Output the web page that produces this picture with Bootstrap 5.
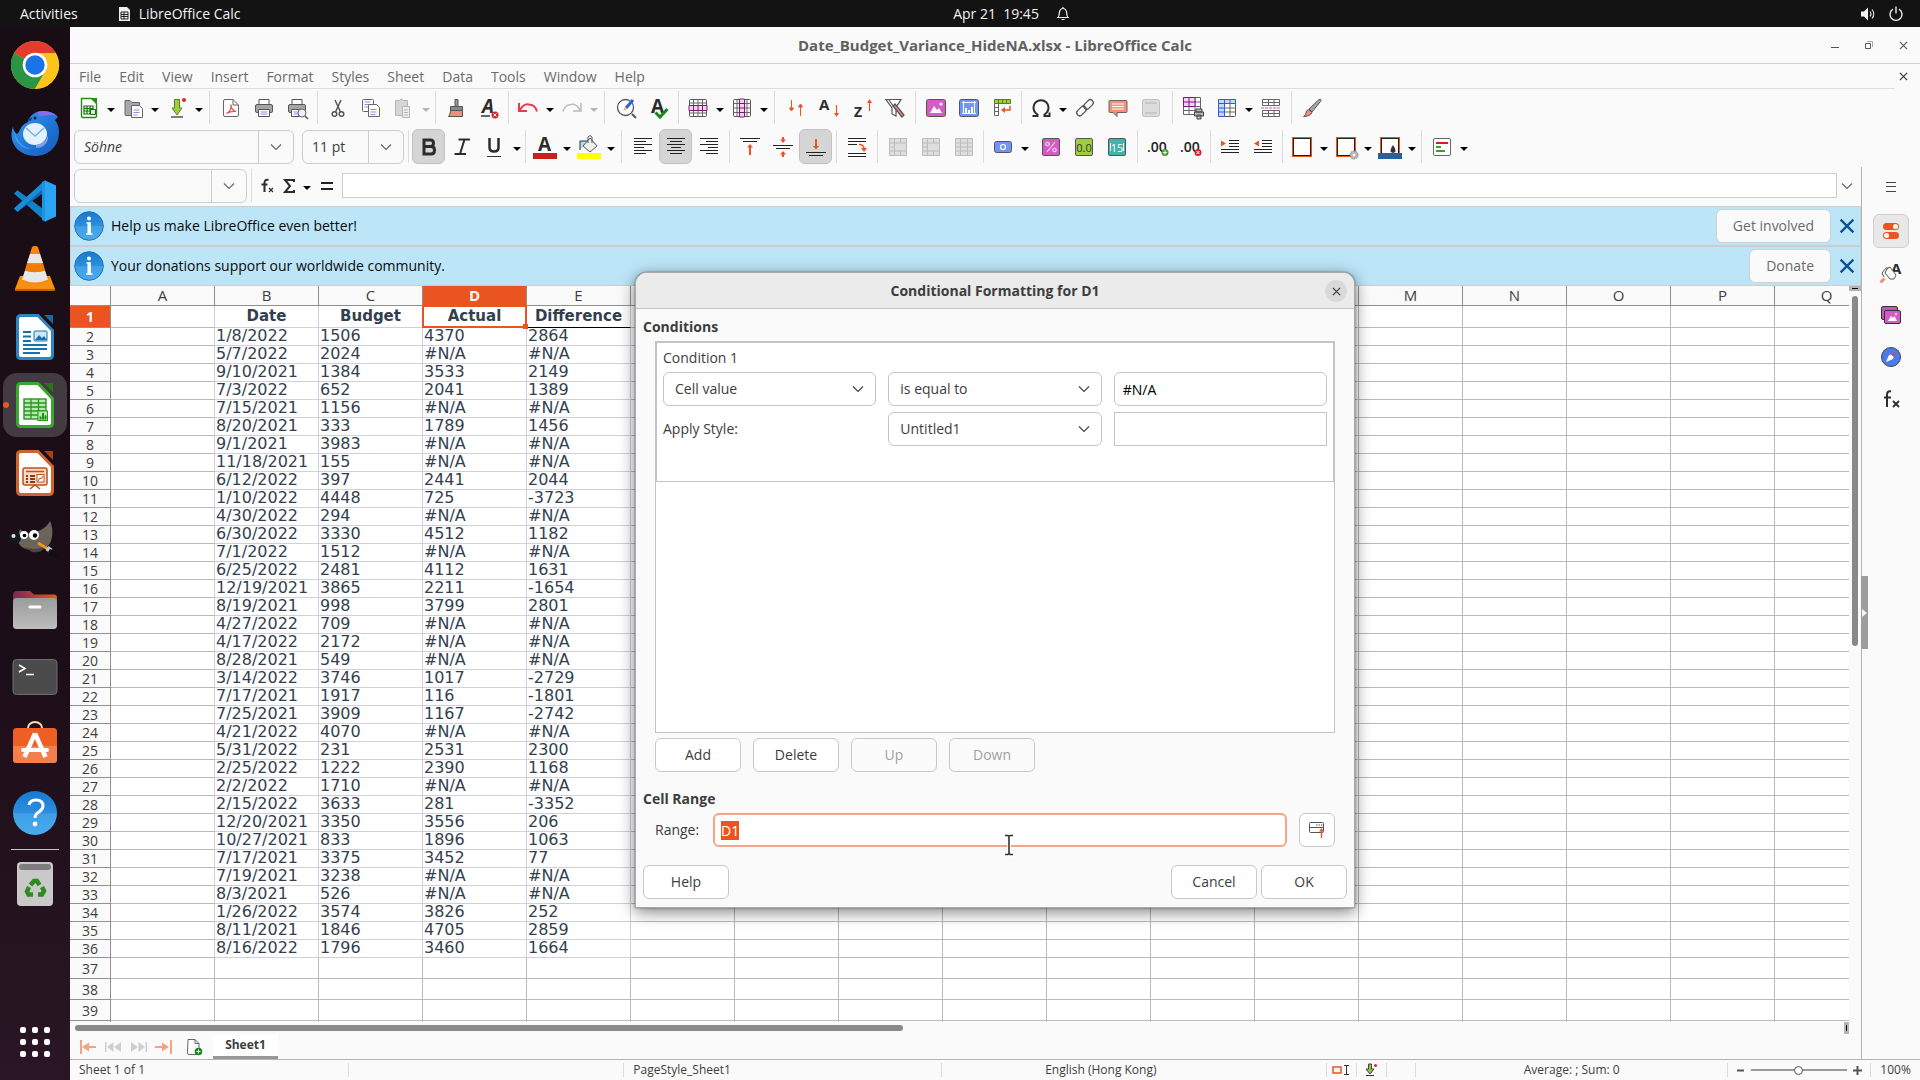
<!DOCTYPE html>
<html lang="en">
<head>
<meta charset="utf-8">
<meta name="viewport" content="width=device-width, initial-scale=1">
<title>Date_Budget_Variance_HideNA.xlsx - LibreOffice Calc</title>
<link rel="stylesheet" href="https://cdn.jsdelivr.net/npm/bootstrap@5.3.0/dist/css/bootstrap.min.css">
<style>
:root{--ui:"Open Sans","Noto Sans",sans-serif;--orange:#e95420;--bg:#fafafa;--line:#cdcdcd;--txt:#3d3d3d;--dim:#6a6a6a}
body{font-family:var(--ui);font-size:14px;line-height:20px;color:var(--txt);background:var(--bg)}
button,input,select{font:inherit;color:inherit}
svg{display:block;flex:none;overflow:visible}
.fill{flex:1 1 0;min-width:0;min-height:0}
.top-panel{height:27px;flex:none;background:#131313;color:#f2f2f2}
.top-panel button,.plain{background:none;border:0;padding:0}
.panel-side{flex:1 1 0}
.clock{margin-left:104px}
.dock{width:70px;flex:none;background:linear-gradient(#190d15,#1c0e18 60%,#2a1624);padding-top:6px}
.dock-app{width:64px;height:64px;flex:none;border-radius:14px;margin-bottom:4px;background:none;border:0;padding:0;display:flex;align-items:center;justify-content:center;position:relative}
.dock-app.on{background:#443a41}
.dock-app.on::before{content:"";position:absolute;left:0;top:29px;width:6px;height:6px;border-radius:3px;background:var(--orange)}
.dock-app.last{margin:auto 0 6px}
.dock-rule{width:48px;height:1px;flex:none;background:#c9c5c8;margin-bottom:2px}
.title-bar{height:37px;flex:none;border-bottom:1px solid #cfcfcf;color:#616161;font-size:15px}
.win-ctl{width:34px;height:34px;display:flex;align-items:center;justify-content:center}
.menu-bar{height:25px;border-bottom:1px solid #dedede;padding:1px 0 0 9px;gap:18px;color:var(--dim)}
.menu-bar a{color:inherit;text-decoration:none}
.tools{height:39px;flex:none;padding:0 0 2px 2px}
.tools-text{padding-left:0}
.tool{width:33px;height:35px;flex:none;border:1px solid transparent;border-radius:6px;background:none;padding:0;display:flex;align-items:center;justify-content:center}
.tool.on{background:#d5d5d5;border-color:#c2c2c2}
.drop{width:11px;height:35px;flex:none;border:0;background:none;padding:4px 0 0;display:flex;align-items:center;justify-content:center}
.drop::before{content:"";border:4px solid transparent;border-top-color:#000;border-bottom:0;width:0}
.drop:disabled::before{border-top-color:#b5b5b5}
.rule-v{width:8px;height:33px;flex:none;display:flex;justify-content:center}
.rule-v::before{content:"";width:1px;background:#dcdcdc}
.rule-w{width:10px}.rule-n{width:6px}
.combo{height:34px;flex:none;border:1px solid var(--line);border-radius:6px;background:var(--bg);overflow:hidden}
.combo input{border:0;background:none;flex:1 1 0;min-width:0;padding:0 9px;outline:0}
.combo button{width:35px;border:0;border-left:1px solid var(--line);background:none;padding:0;display:flex;align-items:center;justify-content:center}
.fx-row{height:39px;flex:none;padding:0 0 2px 4px}
.fx-input{height:25px;border:1px solid var(--line);background:#fff;border-radius:0;outline:0;min-width:0}
.info-row{height:40px;flex:none;background:#bce5f7;border:1px solid #cdcdcd;color:#0a0a0a;padding:0 5px 0 3px}
.info-row span{margin-left:7px}
.pill{height:34px;border:1px solid #c8c8c8;border-radius:6px;background:#fff;padding:0 16px;color:var(--txt)}
.info-row .pill{color:var(--dim);background:var(--bg);border-color:#d0d0d0}
.sheet{overflow:hidden;background:#fff}
.sheet table{table-layout:fixed;border-collapse:separate;border-spacing:0;width:1809px;font-family:var(--ui)}
.sheet th,.sheet td{padding:0;border:0 solid #b9b9b9;border-width:0 1px 1px 0;height:18px;overflow:visible;white-space:nowrap}
.sheet th{background:var(--bg);border-color:#8f8f8f;font-weight:400;text-align:center;line-height:17px;font-size:14px}
.sheet thead th{height:20px;line-height:19px;font-size:15px}
.sheet th.on{background:var(--orange);color:#fff;font-weight:700}
.sheet .first-row>*,.sheet .tall>*{height:21px}
.sheet td.cell{border-color:#cfcfde;font:16px/15px "DejaVu Sans",sans-serif;color:#333f4f;vertical-align:top;padding-left:1px;position:relative}
.sheet td.edge{border-right-color:#cfcfde}
.sheet .first-row td.cell{font:bold 15px/21px "DejaVu Sans",sans-serif;text-align:center;padding:0}
.sheet td.ink{border-bottom-color:#000}
.pick{position:absolute;inset:-1px;border:2px solid var(--orange);z-index:1}
.pick::after{content:"";position:absolute;right:-3px;bottom:-3px;width:5px;height:5px;background:var(--orange)}
.v-scroll{width:12px;flex:none;background:var(--bg)}
.v-grip{height:5px;background:#b5b5b5;display:flex;align-items:center;justify-content:center}
.v-grip::before{content:"";width:6px;height:1px;background:#000}
.v-thumb{width:6px;height:70%;max-height:350px;border-radius:3px;background:#898989;margin:5px 3px 0}
.h-scroll{height:12px;flex:none}
.h-track{flex:1;padding:3px 8px 0 5px}
.h-thumb{width:47%;height:6px;border-radius:3px;background:#898989}
.h-grip{width:5px;margin-right:12px;background:#b5b5b5;display:flex;align-items:center;justify-content:center}
.h-grip::before{content:"";width:1px;height:6px;background:#000}
.tabs-row{height:25px;flex:none;padding-left:8px}
.sheet-tab{height:25px;width:65px;background:#fff;border:0;border-bottom:3px solid #989898;font-weight:700;padding:0;font-size:12px}
.side{width:59px;flex:none;border-left:1px solid #b4b4b4;position:relative;padding-top:3px}
.side .tool{width:36px;height:34px;margin-bottom:8px}
.side .tool:first-child{margin-bottom:10px}
.side .tool.on{background:#e8e8e8;border-color:#cfcfcf}
.side-grip{position:absolute;left:-1px;top:409px;width:7px;height:73px;background:#9d9d9d;display:flex;align-items:center;justify-content:center}
.side-grip::before{content:"";border:4px solid transparent;border-left:5px solid #f4f4f4;border-right:0}
.status{height:21px;flex:none;border-top:1px solid #b4b4b4;font-size:12px}
.status>div{border-right:1px solid #dcdcdc;margin:3px 0;line-height:16px;white-space:nowrap;display:flex;align-items:center;min-width:0}
.status>div:last-child{border:0}
.status span{margin-left:9px}
.status .lang{margin:0 66px 0 0}
.zoomer{appearance:none;-webkit-appearance:none;width:96px;height:12px;background:linear-gradient(#9a9a9a,#9a9a9a) center/100% 2px no-repeat;margin:0 6px}
.zoomer::-webkit-slider-thumb{-webkit-appearance:none;width:9px;height:9px;border-radius:5px;border:1px solid #555;background:#fff}
.dlg{top:245px;width:720px;background:var(--bg);border:1px solid #a9a9a9;border-radius:12px 12px 0 0;box-shadow:0 4px 16px rgba(0,0,0,.5),0 0 2px rgba(0,0,0,.5);z-index:5}
.dlg-head{height:36px;background:#ebebeb;border-bottom:1px solid #c4c4c4;border-radius:11px 11px 0 0;padding:1px 7px 0}
.dlg-x{width:22px;height:22px;border-radius:11px;background:#d9d9d9;border:0;padding:0;display:flex;align-items:center;justify-content:center}
.dlg-body{padding:8px 7px}
.cond-list{height:392px;margin:0 12px;border:1px solid #c4c4c4;background:#fff}
.cond-box{height:140px;border:1px solid #c4c4c4;padding:5px 6px}
.cond-grid{display:grid;grid-template-columns:repeat(3,1fr);gap:6px 12px;align-items:center}
.cond-grid .form-select,.field{height:34px;border:1px solid #c4c4c4;border-radius:6px;background-color:#fff;padding:0 8px 0 11px;font-size:14px;line-height:20px;color:var(--txt);outline:0;min-width:0}
.cond-grid .form-select{background-image:url("data:image/svg+xml,%3Csvg xmlns='http://www.w3.org/2000/svg' viewBox='0 0 12 12'%3E%3Cpath d='M1 3.5l5 5 5-5' fill='none' stroke='%23444' stroke-width='1.2'/%3E%3C/svg%3E");background-size:12px;background-position:right 11px center}
.cond-grid .field{color:#000;padding-left:8px}
.preview-box{height:34px;border:1px solid #c4c4c4}
.btn-row .pill,.foot .pill{width:86px;padding:0}
.pill:disabled{color:#a0a0a0;background:#fbfbfb}
.field.hot{border:2px solid #f4a48a;padding:0 6px}
.field.hot::selection{background:var(--orange);color:#fff}
.btn-row{gap:12px;margin:5px 12px 0}
.range-head{margin-top:17px;margin-bottom:4px}
.range-row{margin:0 12px;gap:12px}
.range-row label{width:46px}
.range-row .pill{width:36px;padding:0;display:flex;align-items:center;justify-content:center}
.foot{margin-top:18px}
.caret-i{left:1002px;top:833px;z-index:9}
</style>
<script src="https://cdn.jsdelivr.net/npm/bootstrap@5.3.0/dist/js/bootstrap.bundle.min.js"></script>
</head>
<body class="d-flex flex-column vh-100 overflow-hidden position-relative">
<svg width="0" height="0" class="position-absolute">
<defs>
<linearGradient id="gi" x1="0" y1="0" x2="0" y2="1"><stop offset="0" stop-color="#1579cf"/><stop offset=".5" stop-color="#2e8fe0"/><stop offset=".52" stop-color="#3f9fe6"/><stop offset="1" stop-color="#4aabec"/></linearGradient>
<linearGradient id="gt" x1="0" y1="0" x2="1" y2="1"><stop offset="0" stop-color="#2f9bf0"/><stop offset="1" stop-color="#1458c0"/></linearGradient>
<linearGradient id="gg" x1="0" y1="0" x2="0" y2="1"><stop offset="0" stop-color="#9b9b9b"/><stop offset="1" stop-color="#bdbdbd"/></linearGradient>
<linearGradient id="gf" x1="0" y1="0" x2="1" y2="0"><stop offset="0" stop-color="#7b2857"/><stop offset="1" stop-color="#e95420"/></linearGradient>
<symbol id="chev" viewBox="0 0 12 12"><path d="M1 3.500l5 5 5-5" fill="none" stroke="#666" stroke-width="1.200"/></symbol>
<symbol id="cross" viewBox="0 0 10 10"><path d="M1 1l8 8M9 1L1 9" fill="none" stroke="currentColor" stroke-width="1.400"/></symbol>
<symbol id="info" viewBox="0 0 30 30"><circle cx="15" cy="15" r="14.300" fill="url(#gi)" stroke="#2c6ea5"/><circle cx="15" cy="7.500" r="2" fill="#fff"/><path d="M12.500 12h3.500v10.500M12 23h6.500" fill="none" stroke="#fff" stroke-width="1.600"/><path d="M15 11.500v11" stroke="#fff" stroke-width="3"/></symbol>
<symbol id="printer" viewBox="0 0 24 24"><path d="M7 3.500h10v5H7z" fill="#fff" stroke="#555"/><rect x="3.500" y="8.500" width="17" height="8" rx="1.500" fill="#a5a5a5" stroke="#555"/><path d="M6.500 13.500h11v7h-11z" fill="#fff" stroke="#555"/><path d="M8.500 16h7M8.500 18h7" stroke="#8d8fe6"/></symbol>
<symbol id="gridbase" viewBox="0 0 24 24"><rect x="3.500" y="3.500" width="17" height="17" rx="1" fill="#fff" stroke="#555"/></symbol>
</defs></svg>

<header class="top-panel d-flex align-items-center">
 <div class="panel-side d-flex align-items-center ps-3"><button type="button" class="text-reset ms-1">Activities</button>
 <button type="button" class="text-reset d-flex align-items-center gap-2 ms-4 ps-3"><svg width="13" height="16" viewBox="0 0 13 16"><path d="M1 1h8l3 3v11H1z" fill="#f0f0f0"/><path d="M3 6h7v7H3zM3 8.500h7M3 10.500h7M6 6v7" fill="none" stroke="#222"/></svg>LibreOffice Calc</button></div>
 <div class="clock d-flex align-items-center gap-3"><button type="button" class="text-reset">Apr 21&nbsp; 19:45</button><svg width="16" height="16" viewBox="0 0 16 16" fill="none" stroke="#eee" stroke-width="1.200"><path d="M3 11.500c1.500-1.500 1-3.500 1.500-5.500C5 3.500 6.300 2.500 8 2.500s3 1 3.500 3.500c.5 2 0 4 1.500 5.500zM6.500 13.500h3M8 1v1.500"/></svg></div>
 <div class="panel-side d-flex align-items-center justify-content-end gap-2 pe-3">
 <svg width="16" height="16" viewBox="0 0 16 16" class="me-1"><path d="M1 5.500h3l4-4v13l-4-4H1z" fill="#f2f2f2"/><path d="M10 5.500q2 2.500 0 5M12 3.500q3.500 4.500 0 9" fill="none" stroke="#ddd" stroke-width="1.200"/></svg>
 <svg width="16" height="16" viewBox="0 0 16 16" fill="none" stroke="#eee" stroke-width="1.400"><path d="M5 3.200a6 6 0 1 0 6 0M8 .5v7"/></svg></div>
</header>

<div class="d-flex fill">
<nav class="dock d-flex flex-column align-items-center" aria-label="Dock">
 <button class="dock-app" type="button" aria-label="Chrome"><svg width="48" height="48" viewBox="0 0 48 48"><circle cx="24" cy="24" r="24" fill="#fbc116"/><path d="M24 24L3.200 12A24 24 0 0 1 44.800 12z" fill="#e33b2e"/><path d="M24 24v-12h20.800L24 12z" fill="#e33b2e"/><path d="M3.200 12A24 24 0 0 0 24 48l10.400-18L24 24z" fill="#2a9645"/><path d="M24 12h20.800A24 24 0 0 1 24 48l10.400-18z" fill="#fdc41c"/><circle cx="24" cy="24" r="12.300" fill="#fff"/><circle cx="24" cy="24" r="9.700" fill="#1a73e8"/></svg></button>
 <button class="dock-app" type="button" aria-label="Thunderbird"><svg width="48" height="48" viewBox="0 0 48 48"><path d="M2 17C-4 36 10 47 24 47c14 0 24-10 24-24 0-6-2-9-4-12l3-3c-4-5-14-7-21-5-5 2-8 5-9 10C8 17 10 22 6 25c-3-2-4-5-4-8z" fill="url(#gt)"/><path d="M26 3c6-2 15-1 20 4-6-2-12 0-18 0z" fill="#8b6cf0"/><path d="M4 24c2 8 8 14 16 16-10 0-17-8-16-16z" fill="#6ab8ff" opacity=".5"/><ellipse cx="24" cy="25" rx="12" ry="11" fill="#e3f1fd"/><path d="M15 19l9 8 9-8" fill="none" stroke="#7fb0e0" stroke-width="1.500"/><path d="M25 36c7-1 11-5 12-10 1 7-4 13-12 13z" fill="#7e9cf0"/><circle cx="24" cy="9" r="1.500" fill="#123"/><path d="M16 11l5-3-1 4z" fill="#0c3d8c"/></svg></button>
 <button class="dock-app" type="button" aria-label="VS Code"><svg width="44" height="44" viewBox="0 0 44 44"><path d="M1 14.500l3.500-3.300L33 32v11z" fill="#1183cc"/><path d="M1 29.500l3.500 3.300L33 12V1z" fill="#0b6ab5"/><path d="M1 29.500l3.500 3.300L31 9V2z" fill="#1a8bd6"/><path d="M32 1.500l11 5v31l-11 5z" fill="#2aa5f3"/><path d="M32 1.500L29 3v38l3 1.500z" fill="#1f93e0"/></svg></button>
 <button class="dock-app" type="button" aria-label="VLC"><svg width="44" height="48" viewBox="0 0 44 48"><path d="M7 31h30l5 13H2z" fill="#f79113"/><path d="M2 44h40v2H2z" fill="#c45f00"/><path d="M19 2q3-2 6 0l10 34q-13 7-26 0z" fill="#f58a0c"/><path d="M17 9h10l3 9H14z" fill="#e8e8e8"/><path d="M12 25.500q10 3 20 0l3 9q-13 6-26 0z" fill="#e8e8e8"/><path d="M14 18q8 3 16 0l2 7.500q-10 3.500-20 0z" fill="#f07b05"/></svg></button>
 <button class="dock-app" type="button" aria-label="LibreOffice Writer"><svg width="38" height="46" viewBox="0 0 38 46"><path d="M5 1.500h17l14.500 15V41q0 3.500-3.500 3.500H5q-3.500 0-3.500-3.500V5Q1.500 1.500 5 1.500z" fill="#fff" stroke="#2d87be" stroke-width="3"/><path d="M28 1h9v9z" fill="#17699f"/><path d="M7 18h8M7 22.500h8M7 27h8M7 31h24M7 35h24M7 39h17" stroke="#1672ab" stroke-width="1.800"/><rect x="18" y="17" width="13" height="10" rx="1" fill="#cfe8f8" stroke="#1672ab"/><path d="M19 26l4-5 3 3 2-2 3 4z" fill="#1672ab"/></svg></button>
 <button class="dock-app on" type="button" aria-label="LibreOffice Calc"><svg width="38" height="46" viewBox="0 0 38 46"><path d="M5 1.500h17l14.500 15V41q0 3.500-3.500 3.500H5q-3.500 0-3.500-3.500V5Q1.500 1.500 5 1.500z" fill="#fff" stroke="#3aa72e" stroke-width="3"/><path d="M28 1h9v9z" fill="#237a13"/><rect x="8" y="17" width="22" height="20" fill="#b6eab0" stroke="#2c951d" stroke-width="1.400"/><path d="M8 21h22M8 25h22M8 29h22M8 33h22M15 17v20M22.500 17v20" stroke="#2c951d" stroke-width="1.300"/><rect x="22" y="29" width="9.500" height="9.500" fill="#b6eab0" stroke="#2c951d"/><path d="M24.500 37.500v-3M27 37.500V31M29.500 37.500v-4" stroke="#1c7a10" stroke-width="1.800"/></svg></button>
 <button class="dock-app" type="button" aria-label="LibreOffice Impress"><svg width="38" height="46" viewBox="0 0 38 46"><path d="M5 1.500h17l14.500 15V41q0 3.500-3.500 3.500H5q-3.500 0-3.500-3.500V5Q1.500 1.500 5 1.500z" fill="#fff" stroke="#d3632c" stroke-width="3"/><path d="M28 1h9v9z" fill="#a8410c"/><rect x="7" y="18" width="24" height="17" rx="2" fill="#fbd9c6" stroke="#bd521c" stroke-width="1.500"/><path d="M10 21.500h18M14 39l5-4 5 4" stroke="#bd521c" stroke-width="1.500" fill="none"/><path d="M10 26h2M10 29h2M10 32h2M14 26h5M14 29h5M14 32h5" stroke="#8d3a0c" stroke-width="1.800"/><rect x="21" y="24.500" width="7" height="7.500" fill="#fff" stroke="#bd521c"/><path d="M22 31l2-3 1 1 2-3" stroke="#bd521c" fill="none"/></svg></button>
 <button class="dock-app" type="button" aria-label="GIMP"><svg width="50" height="44" viewBox="0 0 50 44"><path d="M10 10q4 5 11 4c7-2 14-3 19-12 4 8 3 21-3 26-7 5-19 4-25 0-6-4-4-12-2-18z" fill="#6a6459"/><path d="M14 28q12 5 22-2-4 9-14 7z" fill="#4a453c"/><circle cx="5" cy="19" r="6" fill="#15191c"/><circle cx="3.500" cy="17" r="2" fill="#dfe6ea"/><circle cx="14" cy="16" r="4" fill="#fff"/><circle cx="24" cy="16" r="5" fill="#fff"/><circle cx="14.500" cy="16.500" r="1.800"/><circle cx="25" cy="16.500" r="2.200"/><path d="M28 24l10 6" stroke="#f0922c" stroke-width="3"/><path d="M37 29l4 3" stroke="#c8c8c8" stroke-width="5"/><path d="M40 30q7 2 9 9-7 0-11-6z" fill="#111"/></svg></button>
 <button class="dock-app" type="button" aria-label="Files"><svg width="46" height="42" viewBox="0 0 46 42"><path d="M1 8q0-5 4-5h13l4 3.500h20q3 0 3 3V20H1z" fill="url(#gf)"/><rect x="1" y="10" width="44" height="31" rx="3.500" fill="url(#gg)"/><path d="M18 19h10" stroke="#fff" stroke-width="3" stroke-linecap="round"/></svg></button>
 <button class="dock-app" type="button" aria-label="Terminal"><svg width="46" height="38" viewBox="0 0 46 38"><rect x="1" y="1.500" width="44" height="35" rx="3.500" fill="#4b4b4b" stroke="#6d6d6d"/><path d="M7 7l6 3.500L7 14M14 16.500h8" fill="none" stroke="#fff" stroke-width="1.600"/></svg></button>
 <button class="dock-app" type="button" aria-label="Ubuntu Software"><svg width="46" height="48" viewBox="0 0 46 48"><path d="M16 9V7a7 6 0 0 1 14 0v2" fill="none" stroke="#f5dcae" stroke-width="2"/><rect x="1" y="7" width="44" height="35" rx="3.500" fill="#ee5f26"/><path d="M1 25h44v13.500a3.500 3.500 0 0 1-3.500 3.500h-37A3.500 3.500 0 0 1 1 38.500z" fill="#f27f4c"/><path d="M23 12.500l-10.500 23.500M23 12.500l10.500 23.500" stroke="#fff" stroke-width="4.500"/><path d="M11 29h24" stroke="#fff" stroke-width="4" stroke-linecap="round"/></svg></button>
 <button class="dock-app" type="button" aria-label="Help"><svg width="46" height="46" viewBox="0 0 46 46"><circle cx="23" cy="23" r="22" fill="url(#gi)"/><path d="M17 15q1-5 7-5 7 0 7 6 0 3-4 6-4 2-4 6" fill="none" stroke="#fff" stroke-width="3"/><circle cx="23" cy="34" r="2.400" fill="#fff"/></svg></button>
 <div class="dock-rule"></div>
 <button class="dock-app" type="button" aria-label="Trash"><svg width="38" height="46" viewBox="0 0 38 46"><rect x="1" y="1" width="36" height="44" rx="4" fill="#c9c9c9"/><rect x="3" y="3" width="32" height="6" rx="3" fill="#7d7d7d"/><g fill="none" stroke="#2e8b1f" stroke-width="4.500"><path d="M14.500 24l3.500-4h3l2.500 4"/><path d="M26 26l2 4-2 3.500h-4"/><path d="M17 33.500h-4.500L11 30.500l2-4.500"/></g></svg></button>
 <button class="dock-app last" type="button" aria-label="Show applications"><svg width="30" height="30" viewBox="0 0 30 30" fill="#fff"><g id="dr"><rect x="0" y="0" width="6" height="6" rx="2"/><rect x="12" y="0" width="6" height="6" rx="2"/><rect x="24" y="0" width="6" height="6" rx="2"/></g><use href="#dr" y="12"/><use href="#dr" y="24"/></svg></button>
</nav>

<main class="fill d-flex flex-column position-relative">
 <div class="title-bar d-flex align-items-center">
  <div class="panel-side"></div><div class="fw-bold">Date_Budget_Variance_HideNA.xlsx - LibreOffice Calc</div>
  <div class="panel-side d-flex justify-content-end">
   <button type="button" class="plain win-ctl" aria-label="Minimize"><svg width="10" height="10"><path d="M1 7.500h8" stroke="#555"/></svg></button>
   <button type="button" class="plain win-ctl" aria-label="Restore"><svg width="10" height="10" fill="none"><path d="M1.500 3.500h5v5h-5z" stroke="#555"/><path d="M3 1.500h5.500V7" stroke="#aaa"/></svg></button>
   <button type="button" class="plain win-ctl" aria-label="Close"><svg width="9" height="9"><use href="#cross"/></svg></button>
  </div>
 </div>
 <div class="d-flex flex-shrink-0"><nav class="menu-bar d-flex align-items-center flex-grow-1">
  <a href="#">File</a><a href="#">Edit</a><a href="#">View</a><a href="#">Insert</a><a href="#">Format</a><a href="#">Styles</a><a href="#">Sheet</a><a href="#">Data</a><a href="#">Tools</a><a href="#">Window</a><a href="#">Help</a></nav>
  <button type="button" class="plain d-flex align-items-center ps-1 pe-2 me-1" aria-label="Close document"><svg width="9" height="9"><use href="#cross"/></svg></button></div>

 <div class="tools d-flex align-items-center" role="toolbar" aria-label="Standard">
  <button class="tool" aria-label="New"><svg width="24" height="24" viewBox="0 0 24 24"><path d="M4.500 2.500h10l5 5V20q0 1.500-1.500 1.500H6q-1.500 0-1.500-1.500z" fill="#fff" stroke="#2b8a1c" stroke-width="1.400"/><path d="M14 2h6v6z" fill="#2b8a1c"/><path d="M7 10h9v8H7zM7 12.500h9M7 15h9M10 10v8M13 10v8" fill="none" stroke="#12700a" stroke-width="1.200"/><path d="M13.500 13.500h5v5h-5z" fill="#cfeeca" stroke="#12700a"/></svg></button><button class="drop" aria-label="New menu"></button>
  <button class="tool" aria-label="Open"><svg width="24" height="24" viewBox="0 0 24 24"><path d="M4 18.500V4.500h5l2 2h7.500v5M4 18.500q0 1 1 1h5" fill="#a8a8a8" stroke="#666"/><path d="M5 7h13v12H5z" fill="#a8a8a8"/><path d="M10.500 9.500h8l3 3v9h-11z" fill="#fff" stroke="#666"/><path d="M12.500 14h6M12.500 16.500h6M12.500 19h4" stroke="#8d8fe6"/></svg></button><button class="drop" aria-label="Open menu"></button>
  <button class="tool" aria-label="Save"><svg width="24" height="24" viewBox="0 0 24 24"><path d="M9.500 3.500h5V12H17l-5 7-5-7h2.500z" fill="#9bd03c" stroke="#5f7f2a"/><path d="M6 21h12" stroke="#555" stroke-width="1.500"/><circle cx="19" cy="4" r="2" fill="#d8232f"/></svg></button><button class="drop" aria-label="Save menu"></button>
  <span class="rule-v rule-w"></span>
  <button class="tool" aria-label="Export as PDF"><svg width="24" height="24" viewBox="0 0 24 24"><path d="M6 3.500h8l5.500 5.500V19q0 1.500-1.500 1.500H6q-1.500 0-1.500-1.500V5Q4.500 3.500 6 3.500z" fill="#fff" stroke="#666"/><path d="M14 3.500V9h5.500" fill="none" stroke="#666"/><path d="M7.500 17.500c4-2 5-5 4.500-9 0 4 2 6 5 7-4-.5-6 0-9.500 2z" fill="none" stroke="#ea4b5c" stroke-width="1.200"/></svg></button>
  <button class="tool" aria-label="Print"><svg width="24" height="24"><use href="#printer"/></svg></button>
  <button class="tool" aria-label="Print preview"><svg width="24" height="24" viewBox="0 0 24 24"><use href="#printer"/><circle cx="17" cy="17" r="4" fill="#eef" stroke="#666"/><path d="M20 20l3 3" stroke="#555" stroke-width="1.500"/></svg></button>
  <span class="rule-v"></span>
  <button class="tool" aria-label="Cut"><svg width="24" height="24" viewBox="0 0 24 24" fill="none" stroke="#555" stroke-width="1.500"><path d="M9 4l5.500 12M15 4L9.500 16"/><circle cx="8.500" cy="18" r="2.300"/><circle cx="15.500" cy="18" r="2.300"/></svg></button>
  <button class="tool" aria-label="Copy"><svg width="24" height="24" viewBox="0 0 24 24" fill="#fff" stroke="#666"><rect x="3.500" y="3.500" width="11" height="12" rx="1"/><path d="M5.500 6h6M5.500 8.500h4M5.500 11h4" stroke="#8d8fe6"/><path d="M9.500 8.500h8l3 3v9h-11z"/><path d="M11.500 13.500h6M11.500 16h6M11.500 18.500h5" stroke="#8d8fe6"/></svg></button>
  <button class="tool" disabled aria-label="Paste"><svg width="24" height="24" viewBox="0 0 24 24" fill="#d6d6d6" stroke="#b5b5b5"><path d="M3.500 4.500h4q2-3 4 0h4v15h-12z"/><path d="M10.500 10.500h7v11h-7z" fill="#eee"/><path d="M12 14h4M12 16.500h4M12 19h4"/></svg></button><button class="drop" disabled aria-label="Paste menu"></button>
  <span class="rule-v"></span>
  <button class="tool" aria-label="Clone formatting"><svg width="24" height="24" viewBox="0 0 24 24"><path d="M11 3.500h3v7h-3z" fill="#999" stroke="#555"/><path d="M6.500 10.500h12v4h-12z" fill="#888" stroke="#555"/><path d="M6.500 14.500h12v6H4.500q2-2 2-6z" fill="#f58e7c" stroke="#555"/></svg></button>
  <button class="tool" aria-label="Clear direct formatting"><svg width="24" height="24" viewBox="0 0 24 24"><text x="5" y="17" font-family="Open Sans" font-style="italic" font-weight="700" font-size="19" fill="#2c2c2c">A</text><path d="M4 20h9" stroke="#333" stroke-width="1.500"/><circle cx="18" cy="19" r="3.500" fill="#d12634"/><path d="M16.500 17.500l3 3M19.500 17.500l-3 3" stroke="#fff"/></svg></button>
  <span class="rule-v rule-n"></span>
  <button class="tool" aria-label="Undo"><svg width="24" height="24" viewBox="0 0 24 24" fill="none" stroke="#ea3b4b" stroke-width="2"><path d="M3 7v8h8M3.500 14.500Q8 7 13 8.500q6 0 8 7"/></svg></button><button class="drop" aria-label="Undo menu"></button>
  <button class="tool" disabled aria-label="Redo"><svg width="24" height="24" viewBox="0 0 24 24" fill="none" stroke="#bbb" stroke-width="1.500"><path d="M21 7v8h-8M20.500 14.500Q16 7 11 8.500q-6 0-8 7"/></svg></button><button class="drop" disabled aria-label="Redo menu"></button>
  <span class="rule-v rule-w"></span>
  <button class="tool" aria-label="Find and replace"><svg width="24" height="24" viewBox="0 0 24 24"><circle cx="11.500" cy="11.500" r="8" fill="#fff" stroke="#555" stroke-width="1.300"/><path d="M18 18l4 4" stroke="#555" stroke-width="2"/><path d="M12 12l7-8" stroke="#2a5fdd" stroke-width="3"/><path d="M9.500 14.500l1-3 2 2z" fill="#e5a33d"/></svg></button>
  <button class="tool" aria-label="Spelling"><svg width="24" height="24" viewBox="0 0 24 24"><text x="4" y="17" font-family="Open Sans" font-weight="700" font-size="19" fill="#2c2c2c">A</text><path d="M8.500 16.500l4.500 4.500 7.500-8" fill="none" stroke="#15881f" stroke-width="3"/></svg></button>
  <span class="rule-v rule-n"></span>
  <button class="tool" aria-label="Row"><svg width="24" height="24" viewBox="0 0 24 24" fill="none" stroke="#666"><use href="#gridbase"/><path d="M3 7h18M3 17h18M7.500 3v18M12 3v18M16.500 3v18"/><path d="M3 9.500h18v5H3z" fill="#f3d3f0" stroke="#7b1a74"/><path d="M7.500 10v4M12 10v4M16.500 10v4" stroke="#7b1a74"/></svg></button><button class="drop" aria-label="Row menu"></button>
  <button class="tool" aria-label="Column"><svg width="24" height="24" viewBox="0 0 24 24" fill="none" stroke="#666"><use href="#gridbase"/><path d="M7 3v18M17 3v18M3 7.500h18M3 12h18M3 16.500h18"/><path d="M9.500 3v18h5V3z" fill="#f3d3f0" stroke="#7b1a74"/><path d="M10 7.500h4M10 12h4M10 16.500h4" stroke="#7b1a74"/></svg></button><button class="drop" aria-label="Column menu"></button>
  <span class="rule-v rule-w"></span>
  <button class="tool" aria-label="Sort"><svg width="24" height="24" viewBox="0 0 24 24" stroke="#e95420" fill="#e95420"><path d="M7.500 4v10"/><path d="M5.500 12h4l-2 3z"/><path d="M16.500 9v11"/><path d="M14.500 11h4l-2-3z"/></svg></button>
  <button class="tool" aria-label="Sort ascending"><svg width="24" height="24" viewBox="0 0 24 24"><text x="2" y="14" font-family="Open Sans" font-weight="700" font-size="15" fill="#2c2c2c">A</text><path d="M19.500 9v10" stroke="#e95420" stroke-width="1.200"/><path d="M17 17h5l-2.500 4z" fill="#e95420"/></svg></button>
  <button class="tool" aria-label="Sort descending"><svg width="24" height="24" viewBox="0 0 24 24"><text x="4" y="21" font-family="Open Sans" font-weight="700" font-size="14" fill="#2c2c2c">Z</text><path d="M19.500 5v10" stroke="#e95420" stroke-width="1.200"/><path d="M17 7h5l-2.500-4z" fill="#e95420"/></svg></button>
  <button class="tool" aria-label="AutoFilter"><svg width="24" height="24" viewBox="0 0 24 24" fill="#fff" stroke="#555" stroke-width="1.200"><path d="M3 3.500h15l-5 8V20l-4-2v-6z"/><path d="M10 10l9 11 2-2-9-11z" fill="#e88a7a"/><path d="M6 4l5 7" /></svg></button>
  <span class="rule-v"></span>
  <button class="tool" aria-label="Insert image"><svg width="24" height="24" viewBox="0 0 24 24"><rect x="2.500" y="3.500" width="19" height="17" rx="2" fill="#d75bc6" stroke="#555"/><path d="M6 17l4-7 3 4 2-2 3 5z" fill="#fff"/><circle cx="17" cy="8" r="1.500" fill="#fff"/></svg></button>
  <button class="tool" aria-label="Insert chart"><svg width="24" height="24" viewBox="0 0 24 24"><rect x="2.500" y="3.500" width="19" height="17" rx="2" fill="#6f96f4" stroke="#555"/><path d="M5 6.500h14M6.500 5v13M5 17.500h14M17.500 5v13" stroke="#fff" fill="none"/><path d="M9 17v-5M12 17v-3M15 17v-6" stroke="#fff" stroke-width="2"/></svg></button>
  <button class="tool" aria-label="Pivot table"><svg width="24" height="24" viewBox="0 0 24 24"><path d="M4.500 3.500h16v4h-16z" fill="#9bd03c" stroke="#5b7d22"/><path d="M8.500 3.500v4M12.500 3.500v4M16.500 3.500v4" stroke="#5b7d22"/><path d="M4.500 7.500h4v12h-4zM4.500 11.500h4M4.500 15.500h4" fill="#fff" stroke="#666"/><path d="M20 10v4h-6" stroke="#e95420" stroke-width="1.500" fill="none"/><path d="M15 11v6l-4-3z" fill="#e95420"/></svg></button>
  <span class="rule-v rule-n"></span>
  <button class="tool" aria-label="Special character"><svg width="24" height="24" viewBox="0 0 24 24"><path d="M3.500 20h5v-1.500C6 17 4.500 14.500 4.500 11.500 4.500 7 8 4.200 12 4.200s7.500 2.800 7.500 7.300c0 3-1.500 5.500-4 7V20h5v-3.500" fill="none" stroke="#2c2c2c" stroke-width="2"/></svg></button><button class="drop" aria-label="Special character menu"></button>
  <button class="tool" aria-label="Hyperlink"><svg width="24" height="24" viewBox="0 0 24 24" fill="none" stroke="#555" stroke-width="1.300"><rect x="3" y="12" width="11" height="6" rx="3" transform="rotate(-45 8.500 15)"/><rect x="10" y="5.500" width="11" height="6" rx="3" transform="rotate(-45 15.500 8.500)"/></svg></button>
  <button class="tool" aria-label="Comment"><svg width="24" height="24" viewBox="0 0 24 24"><path d="M4 4.500h16q1 0 1 1v10q0 1-1 1h-9v4l-4-4H4q-1 0-1-1v-10q0-1 1-1z" fill="#f58e7c" stroke="#666"/><path d="M6 8h12M6 10.500h12M6 13h12" stroke="#fff"/></svg></button>
  <button class="tool" disabled aria-label="Headers and footers"><svg width="24" height="24" viewBox="0 0 24 24"><rect x="3.500" y="3.500" width="17" height="17" rx="2" fill="#dcdcdc" stroke="#c0c0c0"/><path d="M6 7h12M6 17h12" stroke="#c0c0c0" stroke-width="1.500"/></svg></button>
  <span class="rule-v rule-w"></span>
  <button class="tool" aria-label="Print area"><svg width="24" height="24" viewBox="0 0 24 24" fill="none" stroke="#666"><path d="M1.500 1.500h17v17h-17zM1.500 6h17M1.500 10.500h17M1.500 14.500h17M7 1.500v17M13 1.500v17" fill="#fff"/><path d="M1.500 1.500H13v9H1.500zM1.500 6H13M7 1.500v9" fill="#f3d3f0" stroke="#7b1a74"/><path d="M14 13h6v3h-6zM12.500 16h9v4h-9zM15 19h4v4h-4z" fill="#bbb" stroke="#444"/></svg></button>
  <button class="tool" aria-label="Freeze rows and columns"><svg width="24" height="24" viewBox="0 0 24 24" fill="none" stroke="#666"><use href="#gridbase"/><path d="M3.500 3.500h17v4h-17zM3.500 7.500h6v13h-6z" fill="#c6d8fb" stroke="#2a5fdd"/><path d="M9.500 12h11M9.500 16h11M15 7.500v13"/><path d="M3.500 12h6M3.500 16h6M9.500 3.500v4M15 3.500v4" stroke="#2a5fdd"/></svg></button><button class="drop" aria-label="Freeze menu"></button>
  <button class="tool" aria-label="Split window"><svg width="24" height="24" viewBox="0 0 24 24" fill="#fff" stroke="#666"><path d="M3.500 3.500h17v6h-17zM3.500 6.500h17M9.500 3.500v6M15 3.500v6M3.500 14.500h17v6h-17zM3.500 17.500h17M9.500 14.500v6M15 14.500v6"/><path d="M2 12h20" stroke="#e84fc0" stroke-dasharray="3 1"/></svg></button>
  <span class="rule-v"></span>
  <button class="tool" aria-label="Show draw functions"><svg width="24" height="24" viewBox="0 0 24 24"><path d="M9 13L19 3.500q3-1 1.500 2L12 16z" fill="#a5a5a5" stroke="#555"/><path d="M8.500 13.500l3.500 3q-2 4-8.500 4 3-2 2.500-4 0-2 2.500-3z" fill="#f58e7c" stroke="#555"/></svg></button>
 </div>

 <div class="tools tools-text d-flex align-items-center" role="toolbar" aria-label="Formatting">
  <div class="combo d-flex ms-1" style="width:220px"><input class="fst-italic" aria-label="Font name" value="Söhne"><button aria-label="Font list"><svg width="12" height="12"><use href="#chev"/></svg></button></div>
  <div class="combo d-flex ms-2" style="width:102px"><input aria-label="Font size" value="11 pt"><button aria-label="Size list"><svg width="12" height="12"><use href="#chev"/></svg></button></div>
  <span class="rule-v"></span>
  <button class="tool on" aria-label="Bold"><svg width="24" height="24" viewBox="0 0 24 24"><path d="M7 5h6.500q3 0 3 3.300 0 3.200-3 3.200H7zM7 11.500h7q3.500 0 3.500 3.700T14 19H7z" fill="none" stroke="#2c2c2c" stroke-width="3"/></svg></button>
  <button class="tool" aria-label="Italic"><svg width="24" height="24" viewBox="0 0 24 24"><path d="M8.500 4.500H20M4.500 19H16M14.500 4.500L10 19" fill="none" stroke="#2c2c2c" stroke-width="2"/></svg></button>
  <button class="tool" aria-label="Underline"><svg width="24" height="24" viewBox="0 0 24 24"><path d="M6.500 3v9.500q0 4 4.500 4t4.500-4V3" fill="none" stroke="#2c2c2c" stroke-width="2.500"/><path d="M4 21.500h14" stroke="#333"/></svg></button><button class="drop" aria-label="Underline menu"></button>
  <span class="rule-v rule-n"></span>
  <button class="tool" aria-label="Font color"><svg width="24" height="24" viewBox="0 0 24 24"><text x="5" y="16" font-family="Open Sans" font-weight="700" font-size="19" fill="#2c2c2c">A</text><path d="M0 18h24v6H0z" fill="#c9211e"/></svg></button><button class="drop" aria-label="Font color menu"></button>
  <button class="tool" aria-label="Background color"><svg width="24" height="24" viewBox="0 0 24 24"><path d="M3 15V6h9" fill="#a9dcf2" stroke="#333"/><path d="M13 3l7 8-7 6-7-6z" fill="#eee" stroke="#555"/><path d="M11 8V2q2-3 4 0v6" fill="none" stroke="#555"/><path d="M0 18h24v6H0z" fill="#ff0"/></svg></button><button class="drop" aria-label="Background color menu"></button>
  <span class="rule-v rule-w"></span>
  <button class="tool" aria-label="Align left"><svg width="24" height="24" viewBox="0 0 24 24" stroke="#222"><path d="M3 3.500h18M3 6.500h12M3 9.500h18M3 12.500h10M3 15.500h18M3 18.500h12"/></svg></button>
  <button class="tool on" aria-label="Center"><svg width="24" height="24" viewBox="0 0 24 24" stroke="#222"><path d="M3 3.500h18M6 6.500h12M3 9.500h18M7 12.500h10M3 15.500h18M6 18.500h12"/></svg></button>
  <button class="tool" aria-label="Align right"><svg width="24" height="24" viewBox="0 0 24 24" stroke="#222"><path d="M3 3.500h18M9 6.500h12M3 9.500h18M11 12.500h10M3 15.500h18M9 18.500h12"/></svg></button>
  <span class="rule-v"></span>
  <button class="tool" aria-label="Align top"><svg width="24" height="24" viewBox="0 0 24 24" stroke="#222"><path d="M2 3.500h20M5 6.500h14"/><path d="M12 12v8" stroke="#e95420" stroke-width="2"/><path d="M9 12.500h6L12 9z" fill="#e95420" stroke="none"/></svg></button>
  <button class="tool" aria-label="Center vertically"><svg width="24" height="24" viewBox="0 0 24 24" stroke="#222"><path d="M2 10.500h20M5 13.500h14"/><path d="M12 2v3M12 19v3" stroke="#e95420" stroke-width="2"/><path d="M9 4.500h6L12 8zM9 19.500h6L12 16z" fill="#e95420" stroke="none"/></svg></button>
  <button class="tool on" aria-label="Align bottom"><svg width="24" height="24" viewBox="0 0 24 24" stroke="#222"><path d="M2 17.500h20M5 20.500h14"/><path d="M12 4v8" stroke="#e95420" stroke-width="2"/><path d="M9 11h6l-3 3.500z" fill="#e95420" stroke="none"/></svg></button>
  <span class="rule-v"></span>
  <button class="tool" aria-label="Wrap text"><svg width="24" height="24" viewBox="0 0 24 24" stroke="#222" fill="none"><path d="M3 3.500h18M3 6.500h18M3 9.500h9M3 18.500h18M3 21.500h18"/><path d="M14 9.500q5 0 5 4" stroke="#e95420" stroke-width="1.400"/><path d="M16 13h6l-3 4z" fill="#e95420" stroke="none"/></svg></button>
  <span class="rule-v"></span>
  <button class="tool" disabled aria-label="Merge and center"><svg width="24" height="24" viewBox="0 0 24 24" fill="#dedede" stroke="#bdbdbd"><path d="M3.500 3.500h17v17h-17zM3.500 8h17M3.500 16h17M8.500 3.500v17M14.500 3.500V8M14.500 16v4.500M3.500 12h5"/></svg></button>
  <button class="tool" disabled aria-label="Merge cells"><svg width="24" height="24" viewBox="0 0 24 24" fill="#dedede" stroke="#bdbdbd"><path d="M3.500 3.500h17v17h-17zM3.500 8h17M3.500 16h17M8.500 3.500v17M14.500 3.500V8M14.500 16v4.500M3.500 12h5"/></svg></button>
  <button class="tool" disabled aria-label="Unmerge cells"><svg width="24" height="24" viewBox="0 0 24 24" fill="#dedede" stroke="#bdbdbd"><path d="M3.500 3.500h17v17h-17zM3.500 8h17M3.500 16h17M8.500 3.500v17M15.500 3.500v17M3.500 12h17"/></svg></button>
  <span class="rule-v rule-n"></span>
  <button class="tool" aria-label="Currency"><svg width="24" height="24" viewBox="0 0 24 24"><rect x="3.500" y="6.500" width="17" height="11" rx="2" fill="#6f96f4" stroke="#555"/><circle cx="12" cy="12" r="2.500" fill="none" stroke="#fff" stroke-width="1.200"/></svg></button><button class="drop" aria-label="Currency menu"></button>
  <button class="tool ms-1" aria-label="Percent"><svg width="24" height="24" viewBox="0 0 24 24"><rect x="3.500" y="3.500" width="17" height="17" rx="1.500" fill="#d75bc6" stroke="#555"/><path d="M8 17l8-10" stroke="#fff"/><circle cx="8.500" cy="9" r="1.800" fill="none" stroke="#fff"/><circle cx="15.500" cy="15" r="1.800" fill="none" stroke="#fff"/></svg></button>
  <button class="tool" aria-label="Number"><svg width="24" height="24" viewBox="0 0 24 24"><rect x="3.500" y="3.500" width="17" height="17" rx="1.500" fill="#a0cc3f" stroke="#555"/><text x="12" y="16.500" text-anchor="middle" font-family="Open Sans" font-size="11" fill="#333">0.0</text></svg></button>
  <button class="tool" aria-label="Date"><svg width="24" height="24" viewBox="0 0 24 24"><rect x="3.500" y="3.500" width="17" height="17" rx="1.500" fill="#43b3a7" stroke="#555"/><text x="12" y="16.500" text-anchor="middle" font-family="Open Sans" font-size="11" fill="#fff">15</text><path d="M5.500 8v8M18.500 8v8" stroke="#fff"/></svg></button>
  <span class="rule-v"></span>
  <button class="tool" aria-label="Add decimal place"><svg width="24" height="24" viewBox="0 0 24 24"><text x="1" y="17" font-family="Open Sans" font-weight="600" font-size="14" fill="#222">.00</text><circle cx="19" cy="17.500" r="3.500" fill="#3ea02c"/><path d="M17 17.500h4M19 15.500v4" stroke="#fff"/></svg></button>
  <button class="tool" aria-label="Delete decimal place"><svg width="24" height="24" viewBox="0 0 24 24"><text x="1" y="17" font-family="Open Sans" font-weight="600" font-size="14" fill="#222">.00</text><circle cx="19" cy="17.500" r="3.500" fill="#d12634"/><path d="M17.500 16l3 3M20.500 16l-3 3" stroke="#fff"/></svg></button>
  <span class="rule-v rule-n"></span>
  <button class="tool" aria-label="Increase indent"><svg width="24" height="24" viewBox="0 0 24 24" stroke="#222"><path d="M11 5.500h10M11 8.500h10M11 11.500h10M3 14.500h18M3 17.500h18"/><path d="M3 5.500v6l5-3z" fill="#e95420" stroke="none"/></svg></button>
  <button class="tool" aria-label="Decrease indent"><svg width="24" height="24" viewBox="0 0 24 24" stroke="#222"><path d="M11 5.500h10M11 8.500h10M11 11.500h10M3 14.500h18M3 17.500h18"/><path d="M8 5.500v6l-5-3z" fill="#e95420" stroke="none"/></svg></button>
  <span class="rule-v rule-n"></span>
  <button class="tool" aria-label="Borders"><svg width="24" height="24" viewBox="0 0 24 24"><rect x="2.500" y="2.500" width="19" height="19" fill="#fff" stroke="#e95420"/><rect x="3.500" y="3.500" width="17" height="17" fill="none" stroke="#222"/></svg></button><button class="drop" aria-label="Borders menu"></button>
  <button class="tool" aria-label="Border style"><svg width="24" height="24" viewBox="0 0 24 24"><rect x="2.500" y="2.500" width="19" height="19" fill="#fff" stroke="#e95420"/><rect x="3.500" y="3.500" width="17" height="17" fill="none" stroke="#222"/><circle cx="20" cy="20" r="4" fill="#bbb" stroke="#777" stroke-dasharray="1.500 1"/><circle cx="20" cy="20" r="1.300" fill="#fff"/></svg></button><button class="drop" aria-label="Border style menu"></button>
  <button class="tool" aria-label="Border color"><svg width="24" height="24" viewBox="0 0 24 24"><rect x="2.500" y="2.500" width="19" height="19" fill="#fff" stroke="#e95420"/><rect x="3.500" y="3.500" width="17" height="17" fill="none" stroke="#222"/><path d="M15 10q5 7 0 8-5-1 0-8z" fill="#333"/><path d="M0 18h24v6H0z" fill="#2a6099"/></svg></button><button class="drop" aria-label="Border color menu"></button>
  <span class="rule-v"></span>
  <button class="tool" aria-label="Conditional formatting"><svg width="24" height="24" viewBox="0 0 24 24"><rect x="3.500" y="3.500" width="17" height="17" rx="1.500" fill="#fff" stroke="#666"/><path d="M6 8h12" stroke="#c9202e" stroke-width="2"/><path d="M6 12h5M6 16h9" stroke="#3ea02c" stroke-width="2"/></svg></button><button class="drop" aria-label="Conditional menu"></button>
 </div>

 <div class="d-flex fill">
  <div class="d-flex flex-column fill">
   <div class="fx-row d-flex align-items-center">
    <div class="combo d-flex" style="width:173px"><input aria-label="Name box"><button aria-label="Name list"><svg width="12" height="12"><use href="#chev"/></svg></button></div>
    <span class="rule-v"></span>
    <button class="plain px-1" aria-label="Function wizard"><svg width="18" height="20" viewBox="0 0 18 20" fill="none" stroke="#2c2c2c"><path d="M9.500 4Q5.500 3 5.500 7v9M2.500 8.500h6" stroke-width="2"/><path d="M10 12l4 4M14 12l-4 4" stroke-width="1.200"/></svg></button>
    <button class="plain" aria-label="Select function"><svg width="16" height="18" viewBox="0 0 16 18"><path d="M13 5V3H4l5 6-5 6h9v-2" fill="none" stroke="#2c2c2c" stroke-width="2"/></svg></button><button class="drop ms-1 pt-1" aria-label="Function menu"></button>
    <button class="plain px-1 mx-1" aria-label="Formula"><svg width="14" height="12"><path d="M1 3h12M1 9h12" stroke="#222" stroke-width="2"/></svg></button>
    <input class="fx-input flex-grow-1" aria-label="Input line"><button class="plain px-1 me-1" aria-label="Expand formula bar"><svg width="12" height="12"><use href="#chev"/></svg></button>
   </div>
   <div class="info-row d-flex align-items-center"><svg width="30" height="30"><use href="#info"/></svg><span class="me-auto">Help us make LibreOffice even better!</span><button class="pill me-2">Get involved</button><button class="plain" aria-label="Close bar"><svg width="16" height="16" color="#0b4f92"><use href="#cross"/></svg></button></div>
   <div class="info-row d-flex align-items-center"><svg width="30" height="30"><use href="#info"/></svg><span class="me-auto">Your donations support our worldwide community.</span><button class="pill me-2">Donate</button><button class="plain" aria-label="Close bar"><svg width="16" height="16" color="#0b4f92"><use href="#cross"/></svg></button></div>
   <div class="d-flex fill">
    <div class="sheet fill"><table><thead id="cols"></thead><tbody id="rows"></tbody></table></div>
    <div class="v-scroll"><div class="v-grip"></div><div class="v-thumb"></div></div>
   </div>
   <div class="h-scroll d-flex"><div class="h-track"><div class="h-thumb"></div></div><div class="h-grip"></div></div>
   <div class="tabs-row d-flex align-items-center">
    <button class="plain" aria-label="First sheet"><svg width="26" height="16" viewBox="0 0 26 16"><path d="M3 1v14" stroke="#f5a284" stroke-width="2"/><path d="M9 8h9" stroke="#f5a284" stroke-width="2"/><path d="M11 3.500v9L4 8z" fill="#f5a284"/></svg></button>
    <button class="plain" disabled aria-label="Previous sheet"><svg width="26" height="16" viewBox="0 0 26 16" fill="#cfcfcf"><path d="M1 3h1.500v10H1zM9.500 3v10L3 8zM17 3v10l-7-5z"/></svg></button>
    <button class="plain" disabled aria-label="Next sheet"><svg width="24" height="16" viewBox="0 0 24 16" fill="#cfcfcf"><path d="M15.500 3H17v10h-1.500zM8.500 3v10L15 8zM1 3v10l7-5z"/></svg></button>
    <button class="plain" aria-label="Last sheet"><svg width="26" height="16" viewBox="0 0 26 16"><path d="M17 1v14" stroke="#f5a284" stroke-width="2"/><path d="M1 8h9" stroke="#f5a284" stroke-width="2"/><path d="M8 3.500v9L15 8z" fill="#f5a284"/></svg></button>
    <button class="plain ms-1 me-2" aria-label="Add sheet"><svg width="21" height="18" viewBox="0 0 21 18"><path d="M4 1.500h7l4 4V15q0 1.500-1.500 1.500H5q-1.500 0-1.500-1.500z" fill="#fff" stroke="#666"/><path d="M11 1.500V5.500h4" fill="none" stroke="#666"/><circle cx="14.500" cy="13.500" r="3.800" fill="#15881f"/><path d="M12.500 13.500h4M14.500 11.500v4" stroke="#fff"/></svg></button>
    <button class="sheet-tab">Sheet1</button>
   </div>
  </div>
  <aside class="side d-flex flex-column align-items-center">
   <button class="tool" aria-label="Sidebar settings"><svg width="12" height="12"><path d="M1 1.500h10M1 5.500h10M1 10.500h10" stroke="#444"/></svg></button>
   <button class="tool on" aria-label="Properties"><svg width="18" height="18" viewBox="0 0 18 18"><rect x="1" y="1" width="16" height="7" rx="3.500" fill="#e95420"/><rect x="1" y="10" width="16" height="7" rx="3.500" fill="#e95420"/><circle cx="13.500" cy="4.500" r="2.500" fill="#fff"/><circle cx="4.500" cy="13.500" r="2.500" fill="#fff"/></svg></button>
   <button class="tool" aria-label="Styles"><svg width="24" height="24" viewBox="0 0 24 24"><text x="12" y="13" font-family="Open Sans" font-weight="700" font-size="15" fill="#2c2c2c">A</text><path d="M5 16l-2-4 4-5 3 0" fill="none" stroke="#555"/><path d="M8 8l3-2 6 8-2 4-4 0-5-6z" fill="#fff" stroke="#555"/><path d="M1.500 21.500l4-4" stroke="#f58e7c" stroke-width="3"/></svg></button>
   <button class="tool" aria-label="Gallery"><svg width="22" height="20" viewBox="0 0 22 20"><rect x="1.500" y="1.500" width="16" height="13" rx="1.500" fill="#c456b6" stroke="#333"/><rect x="4.500" y="5.500" width="16" height="13" rx="1.500" fill="#d75bc6" stroke="#333"/><path d="M8 16l3-5 2 2 1.500-2L17 16z" fill="#fff"/><circle cx="16" cy="9" r="1" fill="#fff"/></svg></button>
   <button class="tool" aria-label="Navigator"><svg width="22" height="22" viewBox="0 0 22 22"><circle cx="11" cy="11" r="9.500" fill="#4a7be8" stroke="#444"/><path d="M6 16l2.500-6 3.500 3.500z" fill="#fff"/><circle cx="11" cy="11" r="2.500" fill="#fff"/><path d="M16 6l-5 2.500 2.500 2.500z" fill="#e0404c"/></svg></button>
   <button class="tool" aria-label="Functions"><svg width="20" height="20" viewBox="0 0 20 20" fill="none" stroke="#2c2c2c"><path d="M10 2.500Q6 1.500 6 6v12M3 8.500h7" stroke-width="2"/><path d="M12 12l6 6M18 12l-6 6" stroke-width="1.800"/></svg></button>
   <div class="side-grip"></div>
  </aside>
 </div>

 <footer class="status d-flex">
  <div style="flex:279 1 0"><span>Sheet 1 of 1</span></div><div style="flex:276 1 0"></div><div style="flex:318 1 0"><span>PageStyle_Sheet1</span></div><div style="flex:386 1 0" class="justify-content-center"><span class="lang">English (Hong Kong)</span></div>
  <div style="flex:29 1 0" class="justify-content-center"><svg width="18" height="12" fill="none"><path d="M1 3h8v6H1z" stroke="#e95420" stroke-width="1.500"/><path d="M12 1.500h5M14.500 1.500v9M12 10.500h5" stroke="#333"/></svg></div>
  <div style="flex:29 1 0" class="justify-content-center"><svg width="14" height="14"><path d="M4.500 1h3v5H10l-4 5-4-5h2.500z" fill="#8cc63a" stroke="#444"/><path d="M2 12.500h8" stroke="#333"/><circle cx="11.500" cy="2.500" r="1.500" fill="#d8232f"/></svg></div>
  <div style="flex:29 1 0"></div><div style="flex:312 1 0" class="justify-content-center">Average: ; Sum: 0</div>
  <div style="flex:143 1 0" class="justify-content-center"><button class="plain" aria-label="Zoom out"><svg width="9" height="9"><path d="M1 4.500h7" stroke="#555" stroke-width="2"/></svg></button><input class="zoomer" type="range" aria-label="Zoom" value="49"><button class="plain" aria-label="Zoom in"><svg width="9" height="9"><path d="M0 4.500h9M4.500 0v9" stroke="#555" stroke-width="2"/></svg></button></div>
  <div style="flex:49 1 0" class="justify-content-center">100%</div>
 </footer>

 <section class="dlg position-absolute start-50 translate-middle-x" role="dialog" aria-labelledby="dt">
  <div class="dlg-head d-flex align-items-center"><div class="panel-side"></div><div class="fw-bold" id="dt">Conditional Formatting for D1</div><div class="panel-side d-flex justify-content-end"><button class="dlg-x" aria-label="Close dialog"><svg width="9" height="9"><use href="#cross"/></svg></button></div></div>
  <form class="dlg-body" onsubmit="return false">
   <div class="fw-bold mb-1">Conditions</div>
   <div class="cond-list"><div class="cond-box"><div class="mb-1">Condition 1</div>
    <div class="cond-grid">
     <select class="form-select" aria-label="Condition type"><option>Cell value</option></select><select class="form-select" aria-label="Operator"><option>is equal to</option></select><input class="field" aria-label="Value" value="#N/A">
     <label for="sty">Apply Style:</label><select class="form-select" id="sty"><option>Untitled1</option></select><div class="preview-box"></div>
    </div></div></div>
   <div class="btn-row d-flex"><button class="pill">Add</button><button class="pill">Delete</button><button class="pill" disabled>Up</button><button class="pill" disabled>Down</button></div>
   <div class="fw-bold range-head">Cell Range</div>
   <div class="range-row d-flex align-items-center"><label for="rng">Range:</label><input class="field hot flex-grow-1" id="rng" value="D1"><button class="pill" aria-label="Shrink"><svg width="18" height="18" viewBox="0 0 18 18"><rect x="1.500" y="1.500" width="14" height="10" rx="1" fill="#fff" stroke="#555"/><path d="M1.500 6.500h14M8 4h1.500M10.500 4H12M13 4h1.500" stroke="#555"/><path d="M13.500 17V9" stroke="#e95420" stroke-width="1.400"/><path d="M11 10.500h5L13.500 7z" fill="#e95420"/></svg></button></div>
   <div class="foot d-flex"><button class="pill me-auto">Help</button><button class="pill me-1">Cancel</button><button class="pill">OK</button></div>
  </form>
 </section>
</main>
</div>
<svg class="caret-i position-absolute" width="14" height="24" viewBox="0 0 14 24" fill="none"><path d="M3 2.500h3l1 1 1-1h3M3 21.500h3l1-1 1 1h3M7 3v18" stroke="#fff" stroke-width="4"/><path d="M3 2.500h3l1 1 1-1h3M3 21.500h3l1-1 1 1h3M7 3v18" stroke="#333" stroke-width="1.600"/></svg>
<script>
const data=`1/8/2022,1506,4370,2864
5/7/2022,2024,#N/A,#N/A
9/10/2021,1384,3533,2149
7/3/2022,652,2041,1389
7/15/2021,1156,#N/A,#N/A
8/20/2021,333,1789,1456
9/1/2021,3983,#N/A,#N/A
11/18/2021,155,#N/A,#N/A
6/12/2022,397,2441,2044
1/10/2022,4448,725,-3723
4/30/2022,294,#N/A,#N/A
6/30/2022,3330,4512,1182
7/1/2022,1512,#N/A,#N/A
6/25/2022,2481,4112,1631
12/19/2021,3865,2211,-1654
8/19/2021,998,3799,2801
4/27/2022,709,#N/A,#N/A
4/17/2022,2172,#N/A,#N/A
8/28/2021,549,#N/A,#N/A
3/14/2022,3746,1017,-2729
7/17/2021,1917,116,-1801
7/25/2021,3909,1167,-2742
4/21/2022,4070,#N/A,#N/A
5/31/2022,231,2531,2300
2/25/2022,1222,2390,1168
2/2/2022,1710,#N/A,#N/A
2/15/2022,3633,281,-3352
12/20/2021,3350,3556,206
10/27/2021,833,1896,1063
7/17/2021,3375,3452,77
7/19/2021,3238,#N/A,#N/A
8/3/2021,526,#N/A,#N/A
1/26/2022,3574,3826,252
8/11/2021,1846,4705,2859
8/16/2022,1796,3460,1664`.split('\n').map(r=>r.split(','));
data.unshift(['Date','Budget','Actual','Difference']);
const letters='ABCDEFGHIJKLMNOPQ'.split('');
document.getElementById('cols').innerHTML='<tr><th style="width:41px"></th>'+letters.map(l=>`<th class="${l==='D'?'on':''}" style="width:104px">${l}</th>`).join('')+'</tr>';
let out='';
for(let r=1;r<=40;r++){
  out+=`<tr class="${r===1?'first-row':r>36?'tall':''}"><th class="${r===1?'on':''}">${r<40?r:''}</th>`;
  letters.forEach((l,c)=>{
    const d=data[r-1];
    if(d&&c>0&&c<5){
      const ink=r===1&&c===4?' ink':'';
      out+=`<td class="cell${ink}">${d[c-1]}${r===1&&c===3?'<span class="pick"></span>':''}</td>`;
    }else out+=`<td class="${d&&c===0?'edge':''}"></td>`;
  });
  out+='</tr>';
}
document.getElementById('rows').innerHTML=out;
const rng=document.getElementById('rng');rng.focus();rng.select();
</script>
</body>
</html>
